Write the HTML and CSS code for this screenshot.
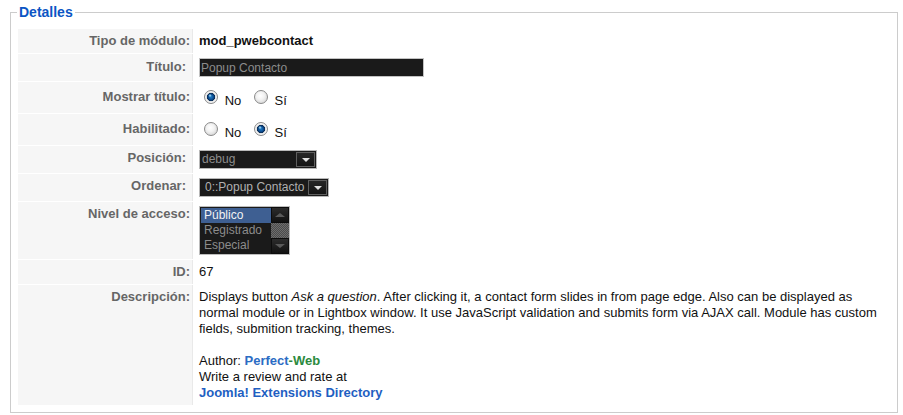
FILE: index.html
```html
<!DOCTYPE html>
<html lang="es">
<head>
    <meta charset="UTF-8">
    <meta name="viewport" content="width=device-width, initial-scale=1.0">

    <title>Módulo: Popup Contacto</title>
    <link rel="stylesheet" href="styles.css">
</head>
<body>
<fieldset class="details">
    <legend>Detalles</legend>
    <table class="admintable">
        <tr>
            <td class="key">Tipo de módulo:</td>
            <td><strong>mod_pwebcontact</strong></td>
        </tr>
        <tr class="input-row">
            <td class="key"><label for="title">Título:</label></td>
            <td><input class="text-input" type="text" id="title" name="title" value="Popup Contacto"></td>
        </tr>
        <tr class="radio-row">
            <td class="key">Mostrar título:</td>
            <td>
                <input type="radio" name="showtitle" id="showtitle0" value="0" checked> <label for="showtitle0">No</label>
                <input type="radio" name="showtitle" id="showtitle1" value="1"> <label for="showtitle1">Sí</label>
            </td>
        </tr>
        <tr class="radio-row">
            <td class="key">Habilitado:</td>
            <td>
                <input type="radio" name="published" id="published0" value="0"> <label for="published0">No</label>
                <input type="radio" name="published" id="published1" value="1" checked> <label for="published1">Sí</label>
            </td>
        </tr>
        <tr>
            <td class="key"><label for="position">Posición:</label></td>
            <td>
                <span class="dropdown dropdown-position">
                    <select id="position" name="position">
                        <option>debug</option>
                    </select>
                    <span class="dropdown-arrow"></span>
                </span>
            </td>
        </tr>
        <tr>
            <td class="key"><label for="ordering">Ordenar:</label></td>
            <td>
                <span class="dropdown dropdown-ordering">
                    <select id="ordering" name="ordering">
                        <option>0::Popup Contacto</option>
                    </select>
                    <span class="dropdown-arrow"></span>
                </span>
            </td>
        </tr>
        <tr>
            <td class="key">Nivel de acceso:</td>
            <td>
                <!-- listbox with 3 visible rows -->
                <div class="listbox">
                    <ul>
                        <li class="selected">Público</li>
                        <li>Registrado</li>
                        <li>Especial</li>
                    </ul>
                    <div class="scrollbar">
                        <span class="scroll-btn scroll-up"></span>
                        <span class="scroll-track"></span>
                        <span class="scroll-btn scroll-down"></span>
                    </div>
                </div>
            </td>
        </tr>
        <tr>
            <td class="key">ID:</td>
            <td>67</td>
        </tr>
        <tr>
            <td class="key">Descripción:</td>
            <td class="description">
                Displays button <em>Ask a question</em>. After clicking it, a contact form slides in from page edge. Also can be displayed as normal module or in Lightbox window. It use JavaScript validation and submits form via AJAX call. Module has custom fields, submition tracking, themes.<br><br>
                Author: <a href="#" class="author"><span class="author-perfect">Perfect</span><span class="author-web">-Web</span></a><br>
                Write a review and rate at<br>
                <a href="#" class="jed">Joomla! Extensions Directory</a>
            </td>
        </tr>
    </table>
</fieldset>
</body>
</html>
```

FILE: styles.css
```css
body {
    margin: 0;
    font-family: "Liberation Sans", Arial, sans-serif;
    font-size: 13px;
    color: #111;
    background-color: #fff;
}

.details {
    margin: 4px 5px 0 10px;
    padding: 8px 6px 6px;
    border: 1px solid #ccc;
    min-width: 0;
}

.details legend {
    padding: 0 2px;
    color: #0b55c4;
    font-weight: bold;
    font-size: 14px;
    line-height: 16px;
}

.admintable {
    width: 100%;
    border-collapse: separate;
    border-spacing: 1px;
}

.admintable td {
    padding: 4px 5px;
    line-height: 16px;
    vertical-align: top;
}

.admintable td.key {
    width: 168px;
    padding: 4px 2px 4px 4px;
    background-color: #f6f6f6;
    border-right: 1px solid #e9e9e9;
    text-align: right;
    font-weight: bold;
    color: #666;
}

.admintable .input-row td.key {
    padding-top: 5px;
}

.admintable .radio-row td {
    padding-top: 5px;
    padding-bottom: 4px;
}

.admintable .radio-row td.key {
    padding-top: 7px;
}

.text-input {
    box-sizing: border-box;
    width: 225px;
    height: 19px;
    margin: 0;
    padding: 0 1px;
    border: 1px solid #c3c3c3;
    background-color: #1a1a1a;
    color: #8c8c8c;
    font: 12px/17px "Liberation Sans", Arial, sans-serif;
    vertical-align: top;
}

input[type="radio"] {
    appearance: none;
    -webkit-appearance: none;
    width: 14px;
    height: 14px;
    margin: 3px 3px 1px 5px;
    border: 1px solid #8a8a8a;
    border-radius: 50%;
    background: radial-gradient(circle at 45% 40%, #fff 0, #f2f2f2 40%, #c9c9c9 100%);
}

input[type="radio"]:checked {
    background:
        radial-gradient(circle at 42% 38%, #b4ebff 0, rgba(180, 235, 255, 0) 1.8px),
        radial-gradient(circle at 50% 50%, #1e7fcc 0, #0d4c8f 2.6px, #072b55 3.8px, #dedede 4.4px, #fafafa 5.4px, #cfcfcf 7px);
}

.admintable label {
    margin-right: 4px;
}

.dropdown {
    display: inline-flex;
    align-items: center;
    box-sizing: border-box;
    height: 19px;
    vertical-align: top;
    border: 1px solid #b8b8b8;
    background-color: #1a1a1a;
}

.dropdown select {
    appearance: none;
    -webkit-appearance: none;
    height: 17px;
    margin: 0;
    padding: 0 2px;
    border: 0;
    outline: none;
    background: transparent;
    color: #8c8c8c;
    font: 12px/17px "Liberation Sans", Arial, sans-serif;
}

.dropdown-position select {
    width: 96px;
}

.dropdown-ordering select {
    width: 108px;
    padding-left: 5px;
    color: #b0b0b0;
}

.dropdown-arrow {
    display: flex;
    align-items: center;
    justify-content: center;
    box-sizing: border-box;
    width: 19px;
    height: 15px;
    margin-right: 1px;
    border: 1px solid #5f5f5f;
    background: linear-gradient(#262626, #141414);
}

.dropdown-arrow::before {
    content: "";
    border-left: 4px solid transparent;
    border-right: 4px solid transparent;
    border-top: 4px solid #e0e0e0;
}

.listbox {
    display: inline-flex;
    vertical-align: top;
    border: 1px solid #bdbdbd;
    background-color: #1a1a1a;
}

.listbox ul {
    width: 70px;
    margin: 0;
    padding: 1px 0 1px 1px;
    list-style: none;
    color: #8c8c8c;
    font: 12px/15px "Liberation Sans", Arial, sans-serif;
}

.listbox li {
    padding: 0 3px;
}

.listbox li.selected {
    background-color: #3e5f92;
    color: #f2f2f2;
}

.scrollbar {
    display: flex;
    flex-direction: column;
    width: 18px;
}

.scroll-btn {
    display: flex;
    align-items: center;
    justify-content: center;
    height: 16px;
    background: linear-gradient(#2c2c2c, #121212);
    border: 1px solid #0c0c0c;
    box-sizing: border-box;
}

.scroll-up::before {
    content: "";
    border-left: 5px solid transparent;
    border-right: 5px solid transparent;
    border-bottom: 4px solid #5a5a5a;
}

.scroll-down::before {
    content: "";
    border-left: 5px solid transparent;
    border-right: 5px solid transparent;
    border-top: 4px solid #5a5a5a;
}

.scroll-track {
    flex: 1;
    background: repeating-conic-gradient(#4c4c4c 0 25%, #6e6e6e 0 50%) 0 0 / 2px 2px;
}

.description {
    color: #111;
}

.description a {
    font-weight: bold;
    text-decoration: none;
}

.author-perfect {
    color: #2b6cc4;
}

.author-web {
    color: #2b8a3e;
}

.jed {
    color: #1f5fc2;
}
```
